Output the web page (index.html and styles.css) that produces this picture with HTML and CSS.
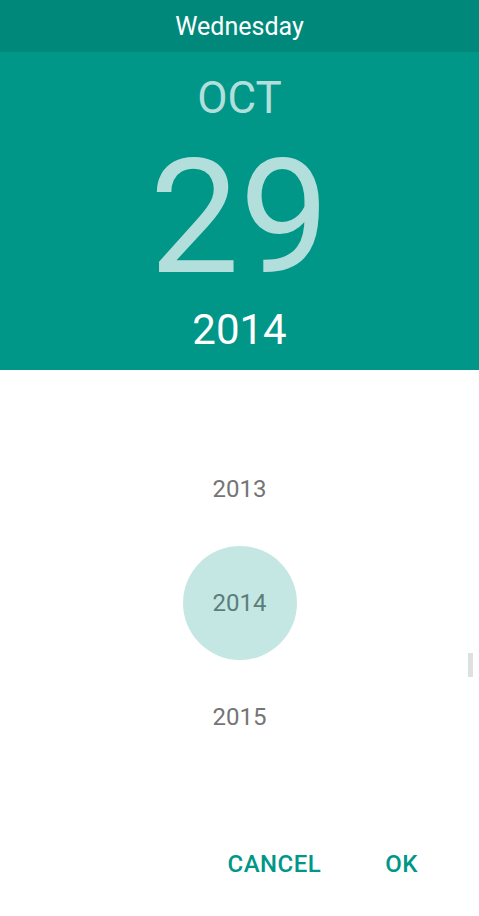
FILE: index.html
```html
<!DOCTYPE html>
<html>
<head>
<meta charset="utf-8">
<link rel="stylesheet" href="styles.css">
</head>
<body>
<div class="dialog">
  <div class="daybar">Wednesday</div>
  <div class="header">
    <div class="month">OCT</div>
    <div class="day">29</div>
    <div class="year">2014</div>
  </div>
  <div class="years">
    <div class="yrow">2013</div>
    <div class="yrow"><span class="sel">2014</span></div>
    <div class="yrow">2015</div>
    <div class="scrollbar"></div>
  </div>
  <div class="actions">
    <span class="btn">CANCEL</span>
    <span class="btn">OK</span>
  </div>
</div>
</body>
</html>
```
FILE: styles.css
```css
html, body {
  margin: 0;
  padding: 0;
  background: #ffffff;
}
body {
  font-family: Roboto, "Noto Sans", sans-serif;
}
.dialog {
  width: 479px;
  height: 916px;
  display: flex;
  flex-direction: column;
  overflow: hidden;
}
.daybar {
  height: 52px;
  background: #00897b;
  color: #ffffff;
  font-size: 25px;
  line-height: 54px;
  text-align: center;
}
.header {
  height: 318px;
  box-sizing: border-box;
  padding-top: 24px;
  background: #009688;
  text-align: center;
}
.month {
  font-size: 44px;
  line-height: 44px;
  color: #b2dfdb;
}
.day {
  margin-top: 28px;
  font-size: 160px;
  line-height: 140px;
  color: #b2dfdb;
}
.year {
  margin-top: 21px;
  font-size: 42px;
  line-height: 42px;
  color: #ffffff;
}
.years {
  position: relative;
  height: 470px;
  box-sizing: border-box;
  padding-top: 62px;
}
.yrow {
  height: 114px;
  display: flex;
  justify-content: center;
  align-items: center;
  font-size: 24px;
  line-height: 114px;
  color: #757575;
}
.sel {
  width: 114px;
  height: 114px;
  border-radius: 50%;
  background: #c4e7e3;
  color: #5b7e7a;
  text-align: center;
}
.scrollbar {
  position: absolute;
  left: 468px;
  top: 283px;
  width: 5px;
  height: 24px;
  background: #e0e0e0;
}
.actions {
  display: flex;
  justify-content: flex-end;
  gap: 64px;
  padding-right: 61px;
  font-size: 24px;
  line-height: 48px;
  font-weight: 500;
  letter-spacing: 0.5px;
  color: #009688;
}
```
